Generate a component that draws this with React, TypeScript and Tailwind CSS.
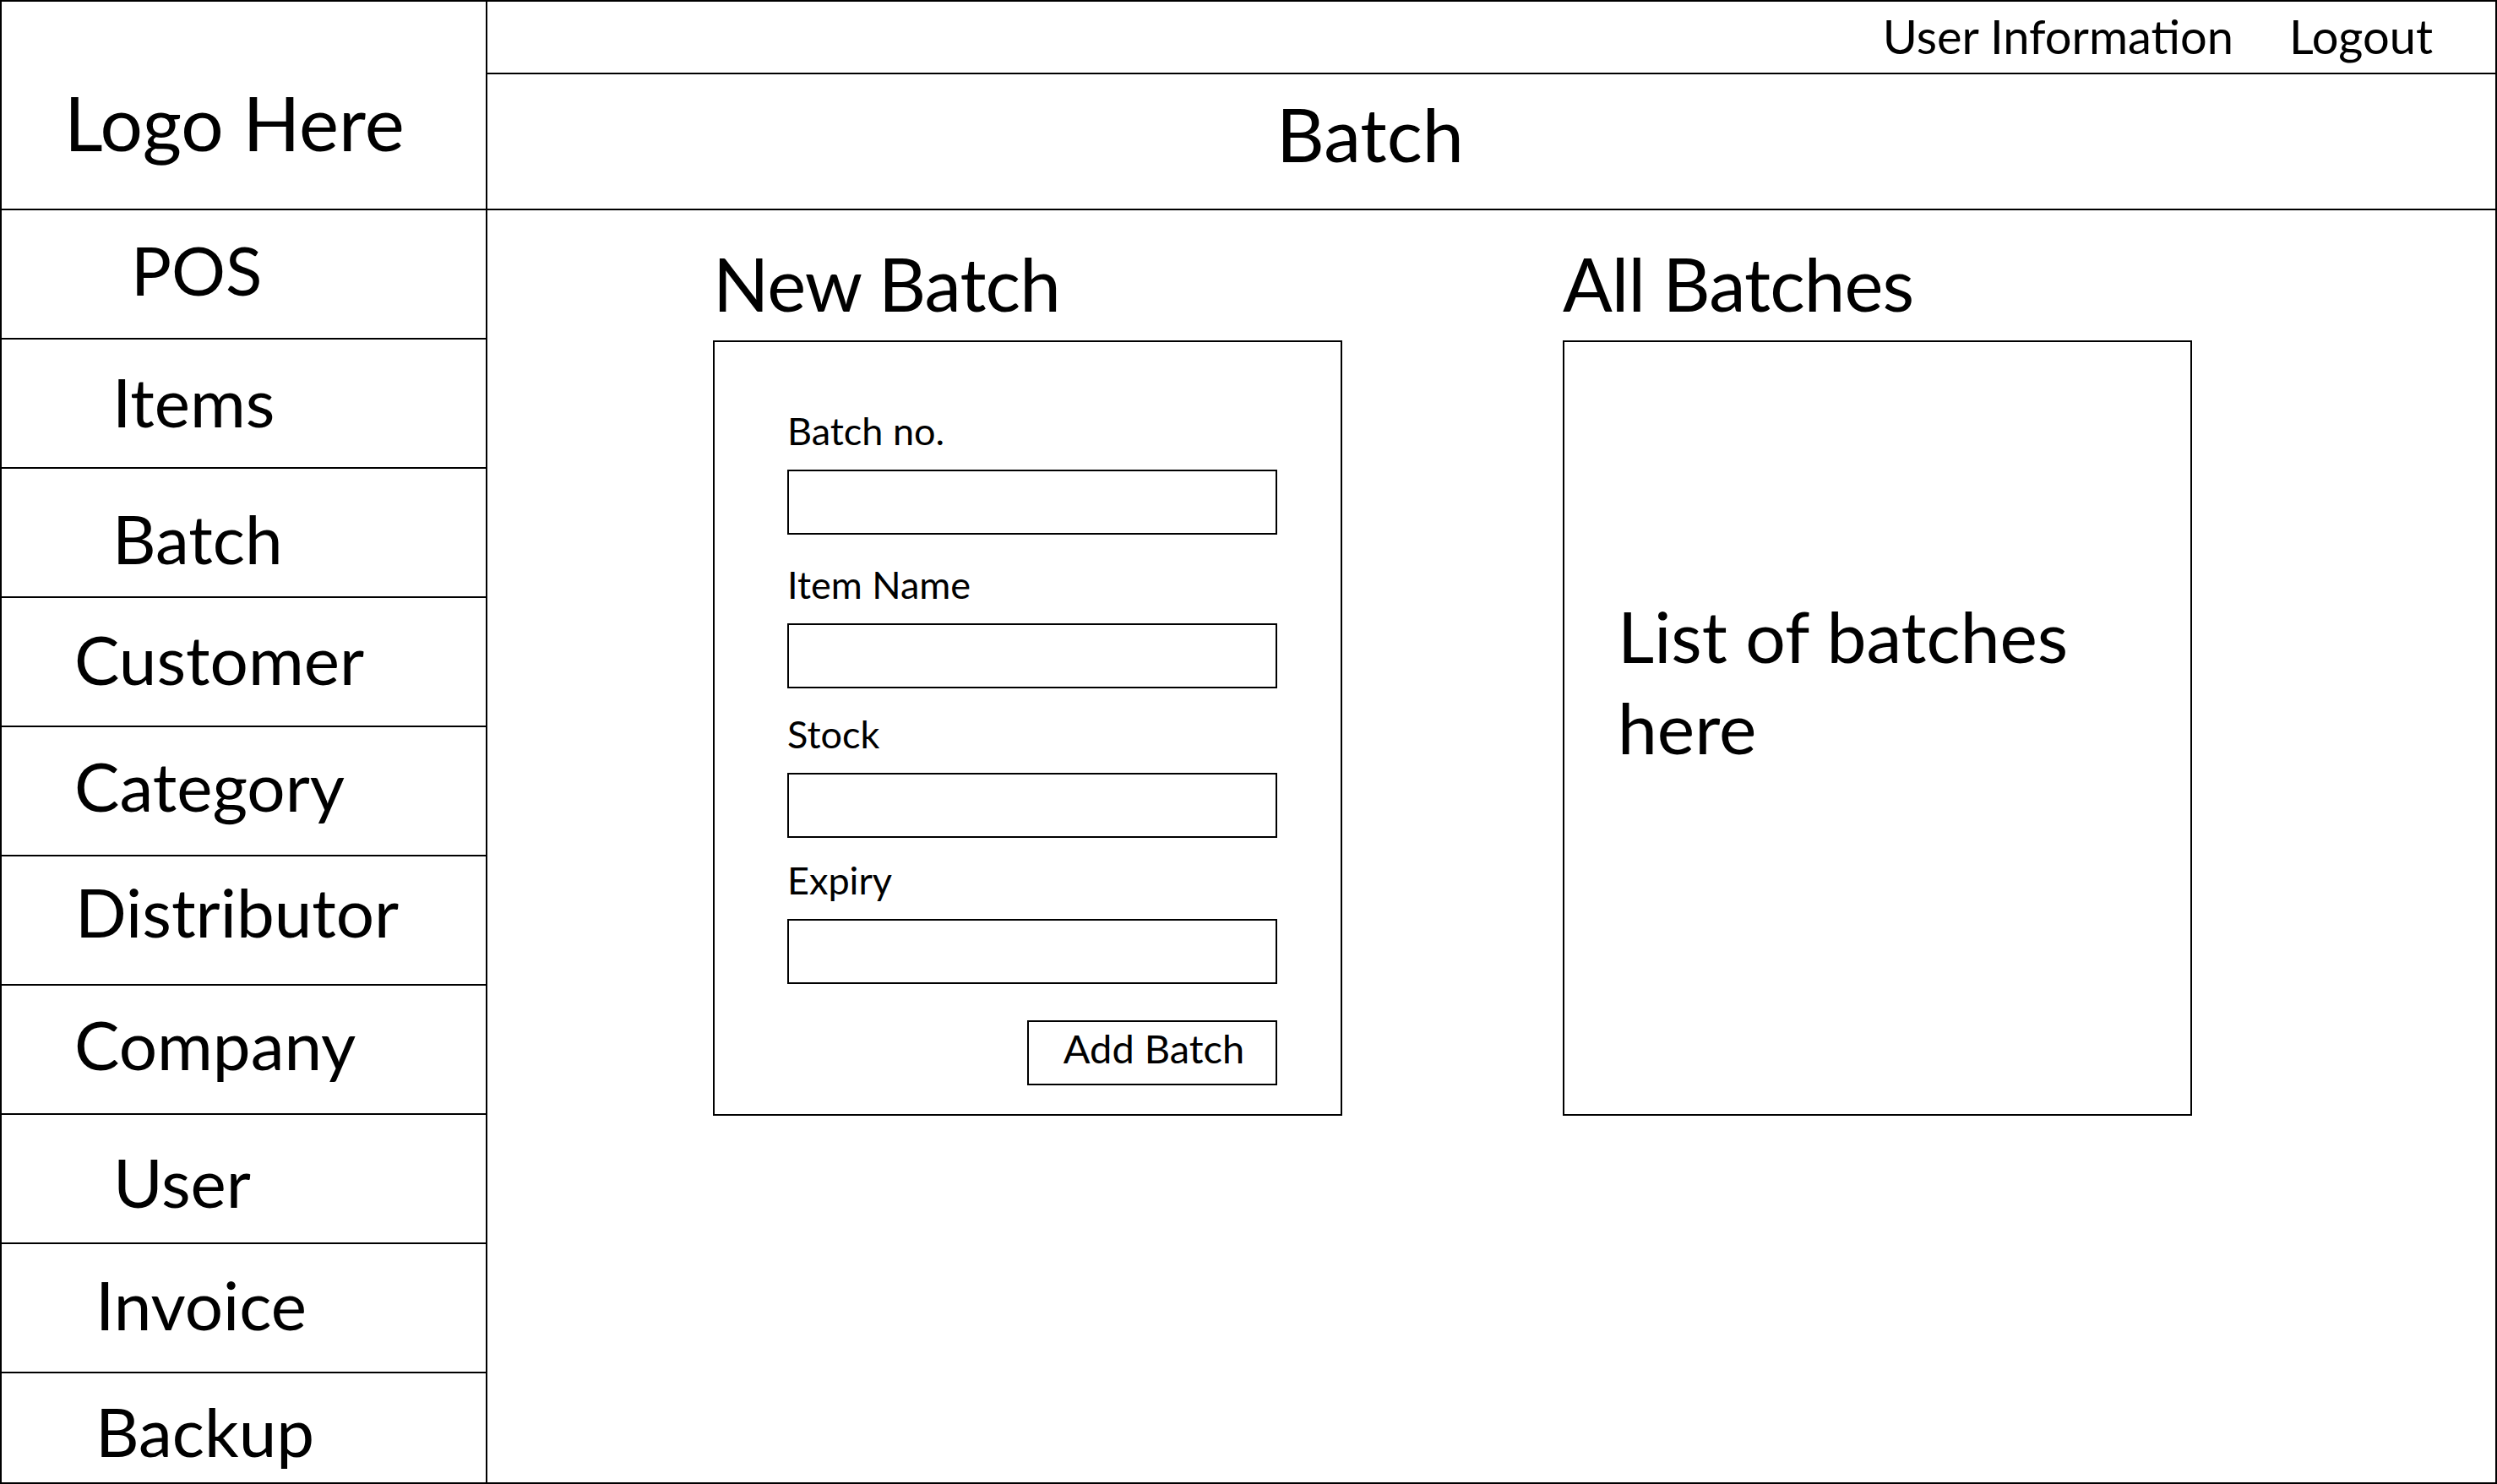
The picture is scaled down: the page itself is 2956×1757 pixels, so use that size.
import React from "react";

const navItems = [
    { label: "POS", cls: "pt-[30px] pl-[153px]" },
    { label: "Items", cls: "pt-[33px] pl-[131px]" },
    { label: "Batch", cls: "pt-[42px] pl-[131px]" },
    { label: "Customer", cls: "pt-[32px] pl-[86px]" },
    { label: "Category", cls: "pt-[29px] pl-[86px]" },
    { label: "Distributor", cls: "pt-[25px] pl-[87px]" },
    { label: "Company", cls: "pt-[29px] pl-[86px]" },
    { label: "User", cls: "pt-[39px] pl-[132px]" },
    { label: "Invoice", cls: "pt-[31px] pl-[111px]" },
    { label: "Backup", cls: "pt-[28px] pl-[111px]" },
];

// spacing between fields isn't even in the mockup
const fields = [
    { label: "Batch no.", cls: "" },
    { label: "Item Name", cls: "mt-[37px]" },
    { label: "Stock", cls: "mt-[32px]" },
    { label: "Expiry", cls: "mt-[28px]" },
];

export default function App() {
    return (
        <div
            className="flex w-[2956px] h-[1757px] border-2 border-black bg-white text-black overflow-hidden"
            style={{ fontFamily: "Lato, 'Open Sans', sans-serif" }}
        >
            {/* Sidebar */}
            <aside className="w-[575px] shrink-0 flex flex-col border-r-2 border-black">
                <div className="h-[247px] shrink-0 border-b-2 border-black pt-[98px] pl-[74px] text-[89px] leading-[89px]">
                    Logo Here
                </div>
                {navItems.map((item, i) => (
                    <div
                        key={item.label}
                        className={`h-[153px] shrink-0 text-[80px] leading-[80px] ${item.cls} ${
                            i < navItems.length - 1 ? "border-b-2 border-black" : ""
                        }`}
                    >
                        {item.label}
                    </div>
                ))}
            </aside>

            {/* Main */}
            <main className="flex-1 flex flex-col">
                <div className="h-[86px] shrink-0 border-b-2 border-black flex justify-end gap-[66px] pr-[74px] pt-[13px] text-[56px] leading-[56px]">
                    <span>User Information</span>
                    <span>Logout</span>
                </div>
                <div className="h-[161px] shrink-0 border-b-2 border-black pt-[26px] pl-[934px] text-[88px] leading-[88px]">
                    Batch
                </div>

                <div className="flex gap-[261px] pl-[267px] pt-[42px]">
                    {/* New Batch form */}
                    <section className="w-[745px]">
                        <h2 className="text-[87px] leading-[90px] tracking-[-0.01em] mb-[22px]">New Batch</h2>
                        <div className="h-[918px] border-2 border-black pl-[86px] pr-[75px] pt-[83px]">
                            <div className="flex flex-col">
                                {fields.map((f) => (
                                    <label key={f.label} className={`flex flex-col gap-[23px] ${f.cls}`}>
                                        <span className="text-[45px] leading-[45px]">{f.label}</span>
                                        <input className="h-[77px] w-[580px] border-2 border-black outline-none" />
                                    </label>
                                ))}
                            </div>
                            <div className="flex justify-end mt-[43px] w-[580px]">
                                <button className="w-[296px] h-[77px] border-2 border-black flex items-center justify-center pb-[10px] pl-[4px] text-[47px] leading-[47px]">
                                    Add Batch
                                </button>
                            </div>
                        </div>
                    </section>

                    {/* All Batches */}
                    <section className="w-[745px]">
                        <h2 className="text-[87px] leading-[90px] tracking-[-0.01em] mb-[22px]">All Batches</h2>
                        <div className="h-[918px] border-2 border-black pl-[63px] pt-[294px] text-[84px] leading-[108px]">
                            List of batches
                            <br />
                            here
                        </div>
                    </section>
                </div>
            </main>
        </div>
    );
}
